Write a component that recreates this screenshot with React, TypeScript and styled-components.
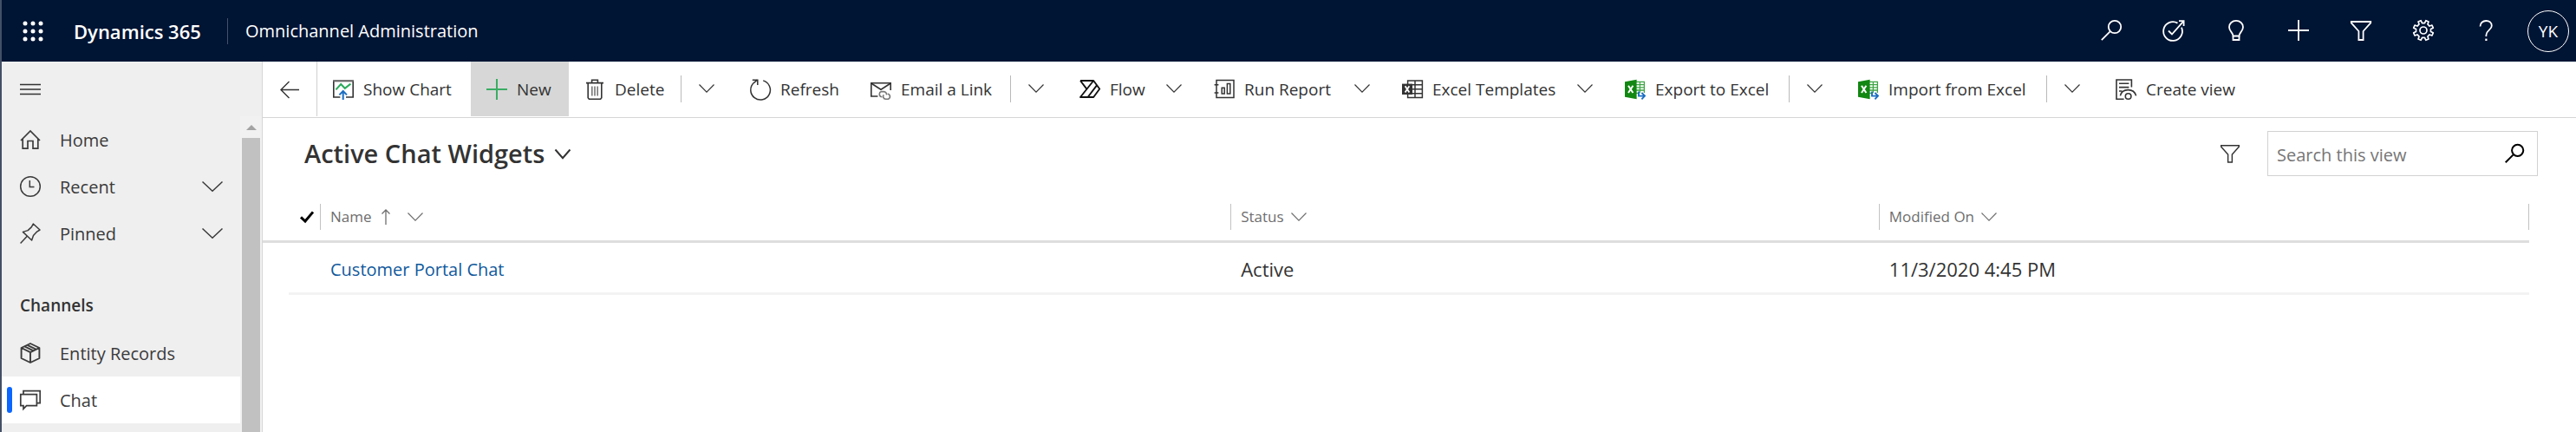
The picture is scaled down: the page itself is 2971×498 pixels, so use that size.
import React from 'react';
import styled, { createGlobalStyle } from 'styled-components';

const GlobalStyle = createGlobalStyle`
  *, *::before, *::after { box-sizing: border-box; }
  body {
    margin: 0;
    background: #ffffff;
    color: #333333;
    font-family: "Open Sans", "Noto Sans", sans-serif;
    font-size: 20px;
    line-height: 28px;
  }
  button {
    margin: 0;
    padding: 0;
    border: 0;
    background: none;
    color: inherit;
    font: inherit;
    cursor: pointer;
    white-space: nowrap;
  }
  a { color: inherit; text-decoration: none; white-space: nowrap; }
  h1, h2 { margin: 0; font: inherit; }
  ul { list-style: none; margin: 0; padding: 0; }
`;

/* ---------- Icons ---------- */

const Glyph = styled.svg<{ $stroke?: number }>`
  display: block;
  flex: none;
  fill: none;
  stroke: currentColor;
  stroke-width: ${(p) => p.$stroke ?? 1.5};
  overflow: visible;
`;

type IconProps = { children: React.ReactNode; stroke?: number; size?: number };
const Icon = ({ children, stroke, size = 24 }: IconProps) => (
  <Glyph width={size} height={size} viewBox="0 0 24 24" $stroke={stroke} aria-hidden="true">
    {children}
  </Glyph>
);

const Chevron = ({ width = 18, height = 10, stroke = 1.2 }) => (
  <Glyph width={width} height={height} viewBox={`0 0 ${width} ${height}`} $stroke={stroke} aria-hidden="true">
    <path d={`M0.5 0.5 L${width / 2} ${height - 0.8} L${width - 0.5} 0.5`} />
  </Glyph>
);

const WaffleIcon = () => (
  <Icon>
    {[3, 12, 21].map((y) =>
      [3, 12, 21].map((x) => <circle key={`${x}-${y}`} cx={x} cy={y} r="2.5" fill="currentColor" stroke="none" />)
    )}
  </Icon>
);

const SearchIcon = ({ size = 24, stroke = 1.8 }) => (
  <Icon size={size} stroke={stroke}>
    <circle cx="16" cy="8" r="7.2" />
    <path d="M10.8 13.2 L0.8 23.2" />
  </Icon>
);

const TaskIcon = () => (
  <Icon stroke={1.8}>
    <path d="M16.5 3.6 A10.9 10.9 0 1 0 21 8.6" />
    <path d="M6 12.5 L10 16.5 L23.4 1.4" />
    <path d="M18 1.2 H23.6 V7" />
  </Icon>
);

const BulbIcon = () => (
  <Icon stroke={1.8}>
    <path d="M8.5 18.5 C8.5 14.5 4 13 4 8.2 A8 7.4 0 0 1 20 8.2 C20 13 15.5 14.5 15.5 18.5 Z" />
    <path d="M8.5 18.5 V23 H15.5 V18.5" />
  </Icon>
);

const PlusIcon = ({ stroke = 1.8 }) => (
  <Icon stroke={stroke}>
    <path d="M12 0 V24 M0 12 H24" />
  </Icon>
);

const FilterIcon = ({ size = 24, stroke = 1.8 }) => (
  <Icon size={size} stroke={stroke}>
    <path d="M0.8 2 H23.2 V3.4 L14.6 13 V23 H9.4 V13 L0.8 3.4 Z" />
  </Icon>
);

const gearOutline = Array.from({ length: 8 }, (_, i) => {
  const point = (radius: number, degrees: number) => {
    const a = ((i * 45 + degrees) * Math.PI) / 180;
    return `${(12 + radius * Math.cos(a)).toFixed(2)} ${(12 + radius * Math.sin(a)).toFixed(2)}`;
  };
  return `${i === 0 ? 'M' : 'L'}${point(8.6, 10)} L${point(11.6, 14)} L${point(11.6, 31)} L${point(8.6, 35)}`;
}).join(' ');

const GearIcon = () => (
  <Icon stroke={1.7}>
    <path d={`${gearOutline} Z`} strokeLinejoin="round" />
    <circle cx="12" cy="12" r="4" />
  </Icon>
);

const HelpIcon = () => (
  <Icon stroke={1.8}>
    <path d="M5.5 7.5 C5.5 3.5 8.5 1 12.3 1 C16 1 18.8 3.2 18.8 6.8 C18.8 11.5 12.4 12 12.4 17.5 V19" />
    <path d="M12.4 21.6 V24" strokeWidth="2.2" />
  </Icon>
);

const MenuIcon = () => (
  <Icon>
    <path d="M0 6.5 H24 M0 12 H24 M0 17.5 H24" />
  </Icon>
);

const HomeIcon = () => (
  <Icon stroke={1.7}>
    <path d="M1 13 L12 2 L23 13 M3.2 11 V22.2 H9 V13.5 H15 V22.2 H20.8 V11" />
  </Icon>
);

const ClockIcon = () => (
  <Icon>
    <circle cx="12" cy="12" r="11.3" />
    <path d="M11.3 5 V12.6 H16.5" />
  </Icon>
);

const PinIcon = () => (
  <Icon>
    <path d="M15.3 1 L23 8 L19.2 10.4 L15.5 14.5 L13.6 20 L3.4 10.4 L9.2 8.6 L13.4 4.6 Z" strokeLinejoin="round" />
    <path d="M8.3 15.3 L0.6 23.4" />
  </Icon>
);

const BoxIcon = () => (
  <Icon stroke={1.9}>
    <path d="M12 1 L22.4 6 V18 L12 23 L1.6 18 V6 Z M1.6 6 L12 11.2 L22.4 6 M12 11.2 V23" strokeLinejoin="round" />
    <path d="M5.4 4.4 L15.6 9.4 M8.6 2.8 L18.9 7.8" />
  </Icon>
);

const ChatIcon = () => (
  <Icon stroke={1.7}>
    <path d="M4 5.6 V1.6 H23.2 V15.6 H19.4" />
    <path d="M0.8 5.6 H19.4 V18.6 H7.6 L4 22.4 V18.6 H0.8 Z" />
  </Icon>
);

const BackIcon = () => (
  <Icon stroke={1.4}>
    <path d="M23 12.5 H2 M11.5 3 L2 12.5 L11.5 22" />
  </Icon>
);

const ShowChartIcon = () => (
  <Icon stroke={1.6}>
    <path d="M8.4 21 H0.8 V2.4 H23.2 V21 H15" />
    <path d="M0 2 H24" stroke="#777777" />
    <path d="M3.4 12.4 L9.2 6 L13.8 10.8 L20.4 5.6" stroke="#2bab5b" strokeWidth="2" />
    <path d="M11.7 24 V14 M7.4 18.4 L11.7 14 L16 18.4" stroke="#1b6ec2" strokeWidth="2" />
  </Icon>
);

const NewIcon = styled.span`
  color: #3aad63;
`;

const TrashIcon = () => (
  <Icon stroke={1.6}>
    <path d="M2 4.6 H22 M8.6 4.4 V1.2 H15.4 V4.4" />
    <path d="M4.2 4.6 V21.8 L5.4 23.2 H18.6 L19.8 21.8 V4.6" />
    <path d="M8.8 8.4 V19.6 M12 8.4 V19.6 M15.2 8.4 V19.6" stroke="#777777" />
  </Icon>
);

const RefreshIcon = () => (
  <Icon>
    <path d="M15.2 1.9 A11.3 11.3 0 1 1 4.6 4.3 L8.4 1.2" />
    <path d="M2.8 1.2 H8.8 V7" />
  </Icon>
);

const MailLinkIcon = () => (
  <Icon stroke={1.6}>
    <path d="M8.4 20 H0.8 V4.8 H23.2 V13" />
    <path d="M0.8 5 L12 12.2 L23.2 5" />
    <path d="M13.4 20.8 A3.2 3.2 0 0 1 12.4 14.6 H15.4 A3.2 3.2 0 0 1 18.4 18.4" stroke="#777777" />
    <path d="M19.6 17.2 A3.1 3.1 0 0 1 20.4 23.2 H17.4 A3.1 3.1 0 0 1 15.2 18.2" stroke="#777777" />
  </Icon>
);

const FlowIcon = () => (
  <Icon stroke={1.9}>
    <path
      d="M1 2 H16.2 L23.2 11.5 L16.2 21 H1 L16.2 2 M1 2 L8.4 11.6 M20 7.4 L9.6 21"
      stroke="#111111"
      strokeLinejoin="round"
    />
  </Icon>
);

const ReportIcon = () => (
  <Icon>
    <path d="M3 7 V1.4 H23 V21.4 H3 V16 M3 7 V16" />
    <path d="M0.6 6.8 H5.4 M0.6 16 H5.4" />
    <path d="M9.2 10.2 H12.2 V17 H9.2 Z M15.4 5.4 H18.8 V17 H15.4 Z" />
  </Icon>
);

const ExcelTemplateIcon = () => (
  <Icon>
    <path d="M6.6 6 V2 H23.4 V21.6 H6.6 V18 M6 6.8 H23.4 M6 11.8 H23.4 M6 16.8 H23.4 M15 2 V21.6" />
    <path d="M0 5.6 H12 V18 H0 Z" fill="#333333" stroke="none" />
    <path d="M3.6 8.2 L8.4 15.4 M8.4 8.2 L3.6 15.4" stroke="#ffffff" strokeWidth="1.8" />
  </Icon>
);

const ExcelIcon = () => (
  <Icon>
    <path d="M13 3.4 H22.4 V16 M13 16.4 H17 M13 6.6 H22.4 M13 9.8 H22.4 M13 13 H22.4 M17.4 3.4 V16" stroke="#3fa546" strokeWidth="1.3" />
    <path d="M0 3.2 L13.6 0.8 V23.2 L0 20.8 Z" fill="#128712" stroke="none" />
    <path d="M4 7.8 L9.4 16 M9.4 7.8 L4 16" stroke="#ffffff" strokeWidth="2" />
    <path d="M16 14.6 V19.6 H22.6 M19.4 15.8 L23 19.6 L19.4 23.4" stroke="#1b6ec2" strokeWidth="1.9" />
  </Icon>
);

const CreateViewIcon = () => (
  <Icon stroke={1.6}>
    <path d="M18.4 9.6 V1 H1 V23.2 H9.6" />
    <path d="M4 5.2 H15.4 M4 9.6 H15.4" />
    <path d="M4 14 H7.4 M5.4 19.4 C7.4 10.6 21 10.2 23.6 19.4" />
    <circle cx="14.6" cy="20" r="3.3" />
  </Icon>
);

const SortUpIcon = () => (
  <Glyph width="10" height="18" viewBox="0 0 10 18" $stroke={1.3} aria-hidden="true">
    <path d="M5 18 V1 M0.5 5.5 L5 1 L9.5 5.5" />
  </Glyph>
);

const CheckIcon = () => (
  <Glyph width="16" height="14" viewBox="0 0 16 14" $stroke={3} aria-hidden="true">
    <path d="M1 7.4 L6 12 L15 1.4" />
  </Glyph>
);

/* ---------- Shell ---------- */

const Shell = styled.div`
  display: flex;
  flex-direction: column;
  min-height: 100vh;
  border-left: 2px solid #434f66;
`;

const TopBar = styled.header`
  display: flex;
  align-items: center;
  height: 71px;
  padding-right: 8px;
  background: #001433;
  color: #ffffff;
`;

const WaffleButton = styled.button`
  display: grid;
  place-items: center;
  width: 71px;
  height: 70px;
`;

const Brand = styled.a`
  width: 189px;
  padding-left: 12px;
  font-size: 22px;
  font-weight: 600;
`;

const AppName = styled.a`
  margin-right: auto;
  padding-left: 20px;
`;

const TopDivider = styled.span`
  width: 1px;
  height: 30px;
  background: #44516b;
`;

const TopActions = styled.div`
  display: flex;
  margin-right: 12px;
`;

const TopAction = styled.button`
  display: grid;
  place-items: center;
  width: 72px;
  height: 66px;
  padding-bottom: 2px;
`;

const Avatar = styled.button`
  width: 48px;
  height: 48px;
  border: 1px solid #ffffff;
  border-radius: 50%;
  font-size: 19px;
`;

const Body = styled.div`
  display: flex;
  flex: 1;
`;

/* ---------- Site map ---------- */

const Sidebar = styled.nav`
  display: flex;
  flex-direction: column;
  flex: none;
  width: 301px;
  border-right: 1px solid #d6d6d6;
  background: #efefef;
`;

const MenuButton = styled.button`
  display: flex;
  align-items: center;
  height: 63px;
  padding-left: 21px;
`;

const NavScroller = styled.div`
  display: flex;
  flex: 1;
`;

const NavContent = styled.div`
  flex: 1;
`;

const NavItem = styled.a<{ $selected?: boolean }>`
  display: flex;
  align-items: center;
  gap: 15px;
  height: 54px;
  padding-left: ${(p) => (p.$selected ? 6 : 21)}px;
  padding-right: 20px;
  background: ${(p) => (p.$selected ? '#ffffff' : 'transparent')};
  color: #3b3b3b;
`;

const SelectedMark = styled.span`
  width: 6px;
  height: 30px;
  margin-right: -6px;
  border-radius: 3px;
  background: #0a66ff;
`;

const NavLabel = styled.span`
  flex: 1;
  margin-left: 7px;
  padding-top: 2px;
`;

const NavHeading = styled.h2`
  padding: 42px 0 14px 21px;
  font-size: 19px;
  font-weight: 600;
`;

const Scrollbar = styled.div`
  display: flex;
  flex-direction: column;
  width: 25px;
  padding: 0 2px;
  background: #f1f1f1;
`;

const ScrollUp = styled.span`
  display: grid;
  place-items: center;
  height: 25px;
`;

const ScrollThumb = styled.span`
  flex: 1;
  background: #c1c1c1;
`;

/* ---------- Command bar ---------- */

const Main = styled.main`
  flex: 1;
  min-width: 0;
`;

const CommandBar = styled.div`
  display: flex;
  align-items: center;
  height: 65px;
  padding-bottom: 1px;
  border-bottom: 1px solid #d6d6d6;
  font-size: 19px;
`;

const BackButton = styled.button`
  display: grid;
  place-items: center;
  width: 63px;
  height: 63px;
  border-right: 1px solid #d0d0d0;
`;

const CommandButton = styled.button<{ $active?: boolean }>`
  display: flex;
  align-items: center;
  gap: 11px;
  height: 63px;
  padding: 0 18px;
  background: ${(p) => (p.$active ? '#d7d7d7' : 'transparent')};
`;

const CommandLabel = styled.span<{ $width: number }>`
  width: ${(p) => p.$width}px;
  text-align: left;
`;

const SplitDivider = styled.span`
  width: 1px;
  height: 31px;
  background: #b9b9b9;
`;

const CommandMenuButton = styled.button<{ $split?: boolean }>`
  display: grid;
  justify-content: start;
  align-content: center;
  width: ${(p) => (p.$split ? 61 : 42)}px;
  height: 63px;
  padding-left: ${(p) => (p.$split ? 20 : 5)}px;
  padding-bottom: 2px;
`;

type Command = {
  label: string;
  width: number;
  icon: React.ReactNode;
  active?: boolean;
  menu?: 'split' | 'plain';
};

const commands: Command[] = [
  { label: 'Show Chart', width: 106, icon: <ShowChartIcon /> },
  { label: 'New', width: 42, icon: <NewIcon><PlusIcon stroke={2} /></NewIcon>, active: true },
  { label: 'Delete', width: 58, icon: <TrashIcon />, menu: 'split' },
  { label: 'Refresh', width: 68, icon: <RefreshIcon /> },
  { label: 'Email a Link', width: 108, icon: <MailLinkIcon />, menu: 'split' },
  { label: 'Flow', width: 42, icon: <FlowIcon />, menu: 'plain' },
  { label: 'Run Report', width: 104, icon: <ReportIcon />, menu: 'plain' },
  { label: 'Excel Templates', width: 144, icon: <ExcelTemplateIcon />, menu: 'plain' },
  { label: 'Export to Excel', width: 136, icon: <ExcelIcon />, menu: 'split' },
  { label: 'Import from Excel', width: 164, icon: <ExcelIcon />, menu: 'split' },
  { label: 'Create view', width: 107, icon: <CreateViewIcon /> },
];

/* ---------- View header ---------- */

const ViewHeader = styled.div`
  display: flex;
  align-items: center;
  padding: 15px 44px 20px 48px;
`;

const ViewSelector = styled.button`
  display: flex;
  align-items: center;
  gap: 12px;
  margin-right: auto;
  font-size: 29px;
  font-weight: 600;
  line-height: 40px;
`;

const FilterButton = styled.button`
  margin-right: 32px;
`;

const SearchBox = styled.form`
  display: flex;
  align-items: center;
  width: 312px;
  height: 52px;
  padding: 0 15px 0 10px;
  border: 1px solid #d2d2d2;
`;

const SearchInput = styled.input`
  flex: 1;
  min-width: 0;
  height: 48px;
  padding: 2px 0 0;
  border: 0;
  outline: 0;
  background: none;
  color: #333333;
  font: inherit;
  &::placeholder { color: #767676; opacity: 1; }
`;

const SearchButton = styled.button`
  color: #000000;
`;

/* ---------- Grid ---------- */

const GridArea = styled.div`
  padding-right: 54px;
`;

const Grid = styled.table`
  width: 100%;
  table-layout: fixed;
  border-collapse: separate;
  border-spacing: 0;
`;

const Column = styled.col<{ $width?: string }>`
  width: ${(p) => p.$width ?? 'auto'};
`;

const HeadCell = styled.th`
  height: 57px;
  padding: 0;
  border-bottom: 3px solid #dedede;
  color: #6e6e6e;
  font-size: 17px;
  font-weight: 400;
  text-align: left;
`;

const HeadInner = styled.div<{ $last?: boolean }>`
  display: flex;
  align-items: center;
  height: 30px;
  padding-left: 11px;
  border-left: 1px solid #c2c2c2;
  border-right: ${(p) => (p.$last ? '1px solid #c2c2c2' : '0')};
`;

const SortButton = styled.button`
  display: flex;
  align-items: center;
  gap: 8px;
`;

const SortMark = styled.span`
  margin-left: 3px;
  margin-right: 12px;
`;

const SelectAll = styled.button`
  display: block;
  margin-left: 13px;
  color: #000000;
`;

const Cell = styled.td<{ $bare?: boolean }>`
  height: 60px;
  padding: 3px 0 0 12px;
  border-bottom: ${(p) => (p.$bare ? '0' : '3px solid #f3f3f3')};
  font-size: 22px;
  white-space: nowrap;
`;

const RecordLink = styled.a`
  color: #10599c;
  font-size: 20px;
`;

export default function App() {
  return (
    <>
      <GlobalStyle />
      <Shell>
        <TopBar>
          <WaffleButton aria-label="App launcher"><WaffleIcon /></WaffleButton>
          <Brand href="#">Dynamics 365</Brand>
          <TopDivider />
          <AppName href="#">Omnichannel Administration</AppName>
          <TopActions>
            <TopAction aria-label="Search"><SearchIcon /></TopAction>
            <TopAction aria-label="Tasks"><TaskIcon /></TopAction>
            <TopAction aria-label="Ideas"><BulbIcon /></TopAction>
            <TopAction aria-label="Quick create"><PlusIcon /></TopAction>
            <TopAction aria-label="Advanced find"><FilterIcon /></TopAction>
            <TopAction aria-label="Settings"><GearIcon /></TopAction>
            <TopAction aria-label="Help"><HelpIcon /></TopAction>
          </TopActions>
          <Avatar>YK</Avatar>
        </TopBar>

        <Body>
          <Sidebar aria-label="Site map">
            <MenuButton aria-label="Collapse site map"><MenuIcon /></MenuButton>
            <NavScroller>
              <NavContent>
                <ul>
                  <li><NavItem href="#"><HomeIcon /><NavLabel>Home</NavLabel></NavItem></li>
                  <li>
                    <NavItem href="#">
                      <ClockIcon /><NavLabel>Recent</NavLabel><Chevron width={24} height={12} stroke={1.5} />
                    </NavItem>
                  </li>
                  <li>
                    <NavItem href="#">
                      <PinIcon /><NavLabel>Pinned</NavLabel><Chevron width={24} height={12} stroke={1.5} />
                    </NavItem>
                  </li>
                </ul>
                <NavHeading>Channels</NavHeading>
                <ul>
                  <li><NavItem href="#"><BoxIcon /><NavLabel>Entity Records</NavLabel></NavItem></li>
                  <li>
                    <NavItem href="#" $selected aria-current="page">
                      <SelectedMark /><ChatIcon /><NavLabel>Chat</NavLabel>
                    </NavItem>
                  </li>
                </ul>
              </NavContent>
              <Scrollbar aria-hidden="true">
                <ScrollUp>
                  <svg width="12" height="6" viewBox="0 0 12 6"><path d="M0 6 L6 0 L12 6 Z" fill="#a3a3a3" /></svg>
                </ScrollUp>
                <ScrollThumb />
              </Scrollbar>
            </NavScroller>
          </Sidebar>

          <Main>
            <CommandBar role="toolbar" aria-label="Commands">
              <BackButton aria-label="Back"><BackIcon /></BackButton>
              {commands.map((c) => (
                <React.Fragment key={c.label}>
                  <CommandButton $active={c.active}>
                    {c.icon}
                    <CommandLabel $width={c.width}>{c.label}</CommandLabel>
                  </CommandButton>
                  {c.menu === 'split' && <SplitDivider />}
                  {c.menu && (
                    <CommandMenuButton $split={c.menu === 'split'} aria-label={`More ${c.label} options`}>
                      <Chevron />
                    </CommandMenuButton>
                  )}
                </React.Fragment>
              ))}
            </CommandBar>

            <ViewHeader>
              <ViewSelector>
                <h1>Active Chat Widgets</h1>
                <Chevron width={18} height={11} stroke={2} />
              </ViewSelector>
              <FilterButton aria-label="Filter"><FilterIcon size={22} stroke={1.6} /></FilterButton>
              <SearchBox role="search">
                <SearchInput type="text" placeholder="Search this view" aria-label="Search this view" />
                <SearchButton type="button" aria-label="Start search"><SearchIcon size={22} stroke={2.2} /></SearchButton>
              </SearchBox>
            </ViewHeader>

            <GridArea>
              <Grid>
                <colgroup>
                  <Column $width="30px" />
                  <Column $width="36px" />
                  <Column />
                  <Column $width="28.6%" />
                  <Column $width="28.7%" />
                </colgroup>
                <thead>
                  <tr>
                    <HeadCell />
                    <HeadCell><SelectAll aria-label="Select all"><CheckIcon /></SelectAll></HeadCell>
                    <HeadCell>
                      <HeadInner>
                        <SortButton>Name<SortMark><SortUpIcon /></SortMark><Chevron /></SortButton>
                      </HeadInner>
                    </HeadCell>
                    <HeadCell>
                      <HeadInner><SortButton>Status<Chevron /></SortButton></HeadInner>
                    </HeadCell>
                    <HeadCell>
                      <HeadInner $last><SortButton>Modified On<Chevron /></SortButton></HeadInner>
                    </HeadCell>
                  </tr>
                </thead>
                <tbody>
                  <tr>
                    <Cell $bare />
                    <Cell />
                    <Cell><RecordLink href="#">Customer Portal Chat</RecordLink></Cell>
                    <Cell>Active</Cell>
                    <Cell>11/3/2020 4:45 PM</Cell>
                  </tr>
                </tbody>
              </Grid>
            </GridArea>
          </Main>
        </Body>
      </Shell>
    </>
  );
}
